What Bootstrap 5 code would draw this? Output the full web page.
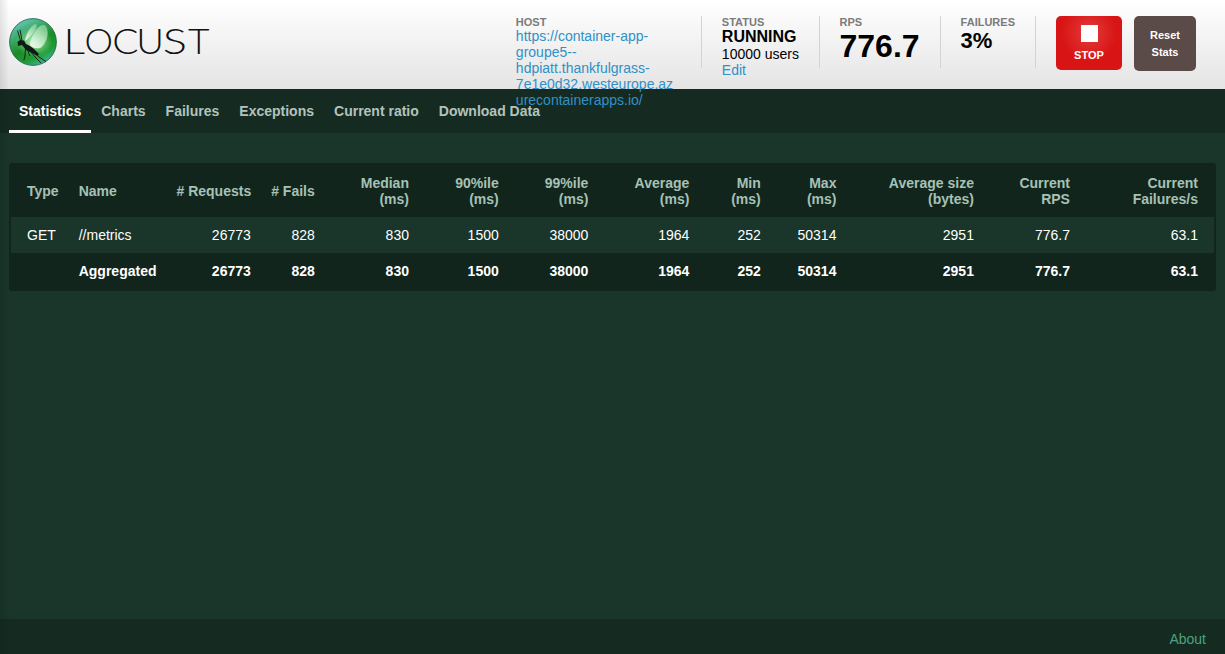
<!DOCTYPE html>
<html lang="en">
<head>
<meta charset="utf-8">
<meta name="viewport" content="width=device-width, initial-scale=1">
<title>Locust</title>
<link href="https://cdn.jsdelivr.net/npm/bootstrap@5.3.0/dist/css/bootstrap.min.css" rel="stylesheet">
<style>
body{background:#1a352a;color:#fff;font:14px/16px "Liberation Sans",Arial,sans-serif;overflow:hidden}
a{text-decoration:none}
.edge-shade{position:fixed;inset:0 auto 0 0;width:9px;background:linear-gradient(90deg,rgba(0,0,0,.09),transparent);z-index:10;pointer-events:none}
.topbar{height:89px;background:linear-gradient(#fff,#e4e4e4);color:#000;padding:16px 29px 0 9px}
.stat{height:52px;padding:0 20px;border-right:1px solid #d3d3d3}
.stat a{color:#3090c7}
.stat-label{font-size:11px;line-height:12px;font-weight:700;color:#7b7b7b}
.host{width:165px;padding-right:5px;overflow-wrap:anywhere;position:relative}
.status-box{padding-right:19.600px}
.status-value{font-size:16px;line-height:18px}
.rps-value{font-size:32px;line-height:37px}
.fail-value{font-size:22px;line-height:26px}
.ctl{border-radius:5px;color:#fff;font-size:11px;font-weight:700}
.stop{width:66px;height:54px;background:radial-gradient(circle at 33px 17px,#e23c3c 0,#d91414 28px);padding-top:9px;margin:0 12px 0 20px}
.stop i{width:17px;height:17px;background:#fff;margin-bottom:5px}
.reset{width:62px;height:55px;background:#5a4a48;line-height:17px}
.tabs{height:44px;background:#152b22;padding-left:9px}
.tabs .nav-link{color:#b3c3bc;font-weight:700;padding:14px 10px 11px;border-bottom:3px solid transparent;height:44px}
.tabs .nav-link.active{color:#fff;border-color:#fff}
.panel{margin:30px 9px 0;border:2px solid #12251c;border-radius:3px;background:#12251c;height:128px}
.stats{table-layout:fixed;width:1203px;border-collapse:collapse}
.stats th,.stats td{padding:0 10px;text-align:right;height:36px;white-space:nowrap}
.stats thead th{height:52px;color:#a6c1b5;vertical-align:middle}
.stats th:first-child,.stats td:first-child{padding-left:16px;text-align:left}
.stats th:nth-child(2),.stats td:nth-child(2){text-align:left}
.stats th:last-child,.stats td:last-child{padding-right:16px}
.stats tbody tr:first-child{background:#1a352a}
.bottom{height:35px;background:#152b22;padding:12px 19px 0}
.bottom a{color:#4aa37e}
</style>
</head>
<body class="vh-100 d-flex flex-column">
<div class="edge-shade"></div>
<header class="topbar d-flex align-items-start flex-shrink-0">
  <svg width="205" height="54" viewBox="9 16 205 54" class="me-auto" role="img" aria-label="Locust">
    <defs>
      <linearGradient id="orb" x1=".15" y1="0" x2=".7" y2="1"><stop stop-color="#6fd0cf"/><stop offset=".28" stop-color="#42ad72"/><stop offset=".57" stop-color="#198b25"/><stop offset=".8" stop-color="#219b36"/><stop offset="1" stop-color="#40b899"/></linearGradient>
      <radialGradient id="glow"><stop stop-color="#dcffd7"/><stop offset="1" stop-color="#7bda83" stop-opacity="0"/></radialGradient>
      <linearGradient id="wing" x1="0" y1="1" x2=".6" y2="0"><stop stop-color="#f4fff1"/><stop offset="1" stop-color="#9fdcae" stop-opacity=".7"/></linearGradient>
    </defs>
    <circle cx="33" cy="42" r="23.400" fill="url(#orb)" stroke="#185c46" stroke-width=".8"/>
    <ellipse cx="34" cy="42" rx="19" ry="15" fill="url(#glow)"/>
    <path d="M25 41C26 33 32 24 36 24C39 27 32 36 25 41Z" fill="url(#wing)"/>
    <path d="M30 45C31 36 37 25 44 25C51 29 47 44 40 48C35 49 31 47 30 45Z" fill="url(#wing)"/>
    <path d="M17.500 42L20 40L24 40.500L26 44L30 46L34 49L39 54L37.500 56L32 53L26 50L22 45L18 46Z" fill="#111815"/>
    <g fill="none" stroke="#111815" stroke-width=".9"><path d="M20.500 40.500L17.500 30.500M22 40.500L20 29.500M25.500 48L25 56L23.800 60.500M30 51L36 58L41 63M34 52L39 57L46 61.500M27 49L30 56"/></g>
    <g font-family="Lato" font-weight="300" font-size="36" fill="#111">
      <text transform="translate(63.500 54.300) scale(1.18 1)">L</text>
      <text x="84.500" y="54.300">O</text>
      <text transform="translate(112.200 54.300) scale(1.08 1)">C</text>
      <text transform="translate(136.300 54.300) scale(1.06 1)">U</text>
      <text transform="translate(162.800 54.300) scale(1.26 1)">S</text>
      <text transform="translate(188 54.300) scale(1.03 1)">T</text>
    </g>
  </svg>
  <div class="stat"><div class="stat-label">HOST</div><div class="host"><a href="#">https://container-app-groupe5--hdpiatt.thankfulgrass-7e1e0d32.westeurope.azurecontainerapps.io/</a></div></div>
  <div class="stat status-box"><div class="stat-label">STATUS</div><div class="fw-bold status-value">RUNNING</div><div>10000 users</div><a href="#">Edit</a></div>
  <div class="stat"><div class="stat-label">RPS</div><div class="fw-bold rps-value">776.7</div></div>
  <div class="stat"><div class="stat-label">FAILURES</div><div class="fw-bold fail-value">3%</div></div>
  <a href="#" class="ctl stop d-flex flex-column align-items-center"><i></i><span>STOP</span></a>
  <a href="#" class="ctl reset d-flex align-items-center justify-content-center text-center">Reset<br>Stats</a>
</header>
<nav class="tabs nav flex-nowrap flex-shrink-0">
  <a class="nav-link active" href="#">Statistics</a><a class="nav-link" href="#">Charts</a><a class="nav-link" href="#">Failures</a><a class="nav-link" href="#">Exceptions</a><a class="nav-link" href="#">Current ratio</a><a class="nav-link" href="#">Download Data</a>
</nav>
<main class="flex-grow-1">
  <div class="panel">
    <table class="stats">
      <colgroup><col style="width:57.700px"><col style="width:97.800px"><col style="width:94.300px"><col style="width:64px"><col style="width:94.200px"><col style="width:89.800px"><col style="width:89.600px"><col style="width:101px"><col style="width:71.400px"><col style="width:75.700px"><col style="width:137.500px"><col style="width:96px"><col style="width:134px"></colgroup>
      <thead><tr><th>Type</th><th>Name</th><th># Requests</th><th># Fails</th><th>Median<br>(ms)</th><th>90%ile<br>(ms)</th><th>99%ile<br>(ms)</th><th>Average<br>(ms)</th><th>Min<br>(ms)</th><th>Max<br>(ms)</th><th>Average size<br>(bytes)</th><th>Current<br>RPS</th><th>Current<br>Failures/s</th></tr></thead>
      <tbody>
      <tr><td>GET</td><td>//metrics</td><td>26773</td><td>828</td><td>830</td><td>1500</td><td>38000</td><td>1964</td><td>252</td><td>50314</td><td>2951</td><td>776.7</td><td>63.1</td></tr>
      <tr class="fw-bold"><td></td><td>Aggregated</td><td>26773</td><td>828</td><td>830</td><td>1500</td><td>38000</td><td>1964</td><td>252</td><td>50314</td><td>2951</td><td>776.7</td><td>63.1</td></tr>
      </tbody>
    </table>
  </div>
</main>
<footer class="bottom text-end flex-shrink-0"><a href="#">About</a></footer>
<script src="https://cdn.jsdelivr.net/npm/bootstrap@5.3.0/dist/js/bootstrap.bundle.min.js"></script>
</body>
</html>
